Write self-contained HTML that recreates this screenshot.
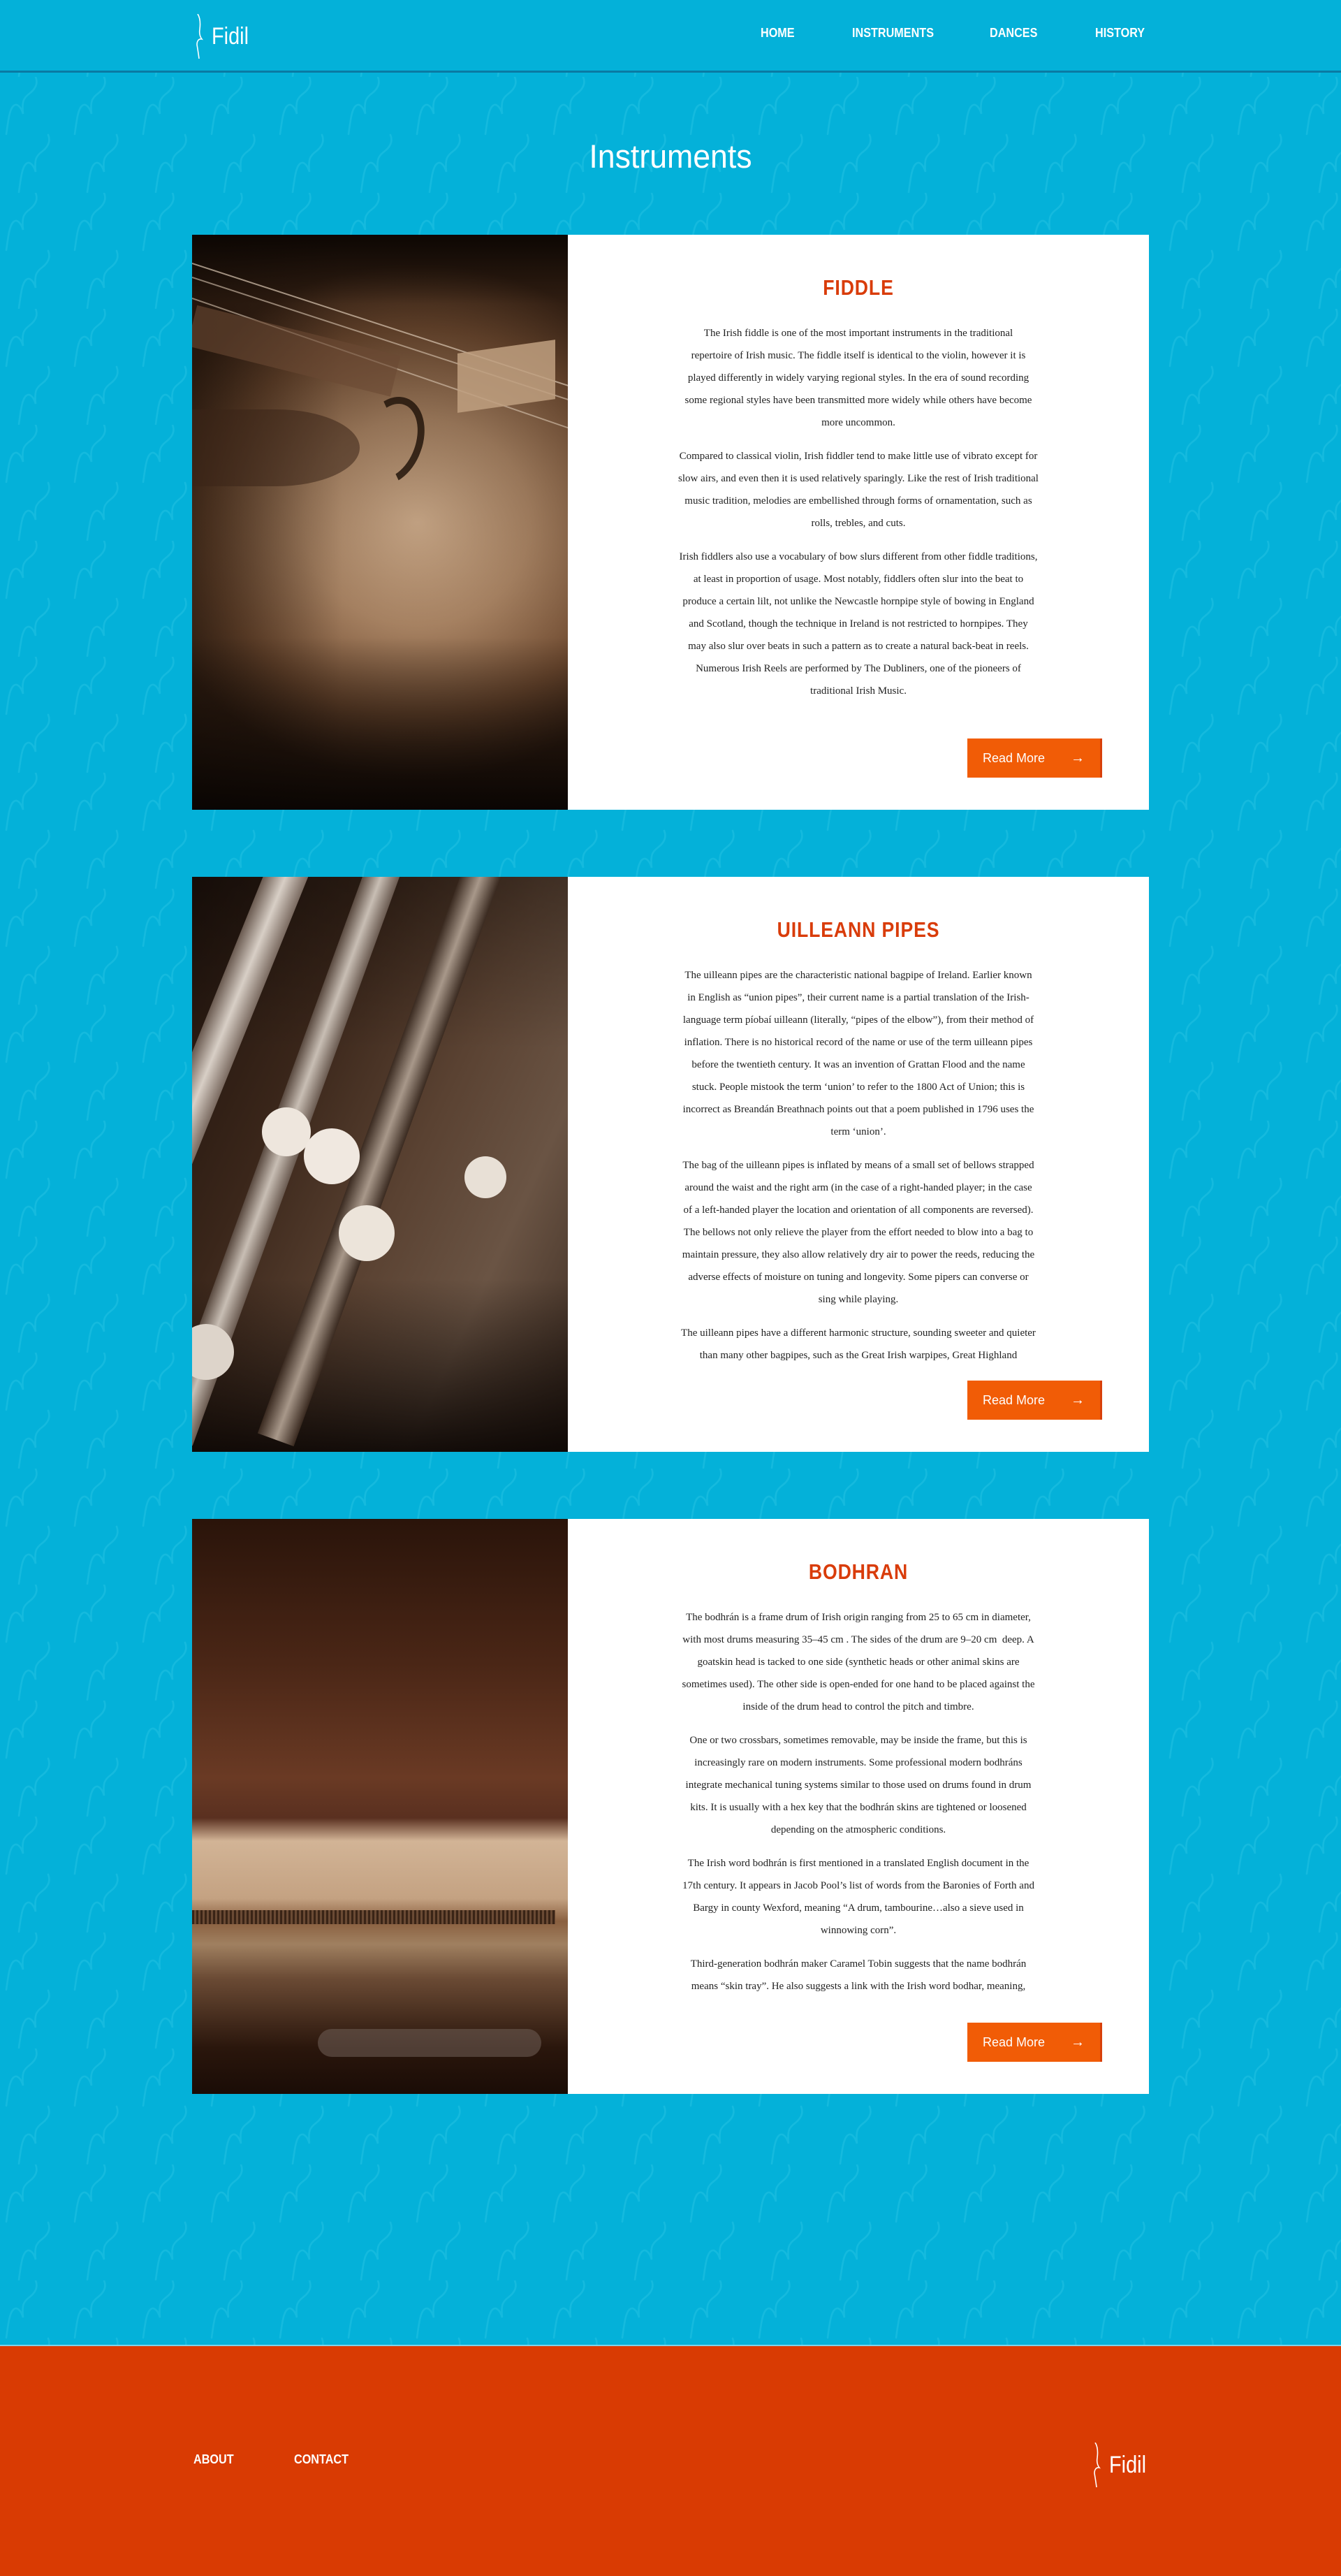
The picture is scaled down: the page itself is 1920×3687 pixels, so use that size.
<!DOCTYPE html>
<html><head><meta charset="utf-8"><style>
*{margin:0;padding:0;box-sizing:border-box}
body{width:1920px;height:3687px;position:relative;background:#04b1d9;overflow:hidden;font-family:"Liberation Sans",sans-serif}
#pat{position:absolute;left:0;top:104px;width:1920px;height:3253px}
header{position:absolute;left:0;top:0;width:1920px;height:104px;background:#04b1d9;border-bottom:3px solid #0a7aa3}
.logo{position:absolute;display:flex;align-items:center;color:#fff}
.logo span{font-size:34px;font-weight:300;margin-left:4px;transform:scaleX(.85);transform-origin:left}
nav a{position:absolute;top:37px;color:#fff;font-weight:bold;font-size:18px;text-decoration:none;transform:scaleX(.9);transform-origin:left}
h1{position:absolute;top:196px;left:0;width:1920px;text-align:center;color:#fff;font-weight:normal;font-size:47px;transform:scaleX(.95)}
.card{position:absolute;left:275px;width:1370px;height:823px;background:#fff}
.img{position:absolute;left:0;top:0;width:538px;height:823px;overflow:hidden}
.card h2{position:absolute;left:538px;width:832px;top:58px;text-align:center;color:#d93c0a;font-size:31px;font-weight:bold;letter-spacing:1px;transform:scaleX(.86)}
.txt{position:absolute;left:538px;width:832px;top:125px;text-align:center;font-family:"Liberation Serif",serif;font-size:15px;line-height:32px;color:#222;white-space:nowrap}
.txt p{margin-bottom:16px}
.btn{position:absolute;left:1110px;top:721px;width:193px;height:56px;background:#f15c06;border-right:3px solid #d8400a;color:#fff;font-size:18px;line-height:56px;padding-left:22px}
.btn b{position:absolute;right:22px;top:0;font-weight:bold;font-size:20px}
footer{position:absolute;left:0;top:3356px;width:1920px;height:331px;background:#d93b03;border-top:2px solid #7fd3ea}
footer a{position:absolute;top:152px;color:#fff;font-weight:bold;font-size:18px;transform:scaleX(.9);transform-origin:left}
</style></head><body>
<svg id="pat" width="1920" height="3253"><defs><pattern id="p" width="98" height="166" patternUnits="userSpaceOnUse" x="0" y="6">
<g fill="none" stroke="#15bade" stroke-width="2.6" stroke-linecap="round">
<path d="M51,0 C55,10 50,18 42,24 C34,30 31,35 33,53 C30,42 24,38 20,41 C14,45 12,60 9,82"/>
<path d="M69,83 C73,93 68,101 60,107 C52,113 49,118 51,136 C48,125 42,121 38,124 C32,128 30,143 27,165"/>
</g></pattern></defs><rect width="1920" height="3253" fill="url(#p)"/></svg>
<header>
<div class="logo" style="left:277px;top:20px"><svg width="22" height="64" viewBox="0 0 22 64"><path d="M6,0 C10,6 10,14 9,22 C8,28 9,32 12,36 C8,35 5,38 5,44 C6,50 7,56 8,64" fill="none" stroke="#fff" stroke-width="1.6"/></svg><span>Fidil</span></div>
<nav><a style="left:1089px">HOME</a><a style="left:1220px">INSTRUMENTS</a><a style="left:1417px">DANCES</a><a style="left:1568px">HISTORY</a></nav>
</header>
<h1>Instruments</h1>

<div class="card" style="top:336px">
<div class="img" style="background:linear-gradient(180deg,rgba(10,5,2,.95) 0%,rgba(10,5,2,.2) 12%,rgba(0,0,0,0) 70%,rgba(8,4,2,.95) 100%),linear-gradient(90deg,rgba(30,18,10,.5) 0%,rgba(0,0,0,0) 40%),radial-gradient(ellipse 75% 45% at 60% 50%,#cdab8a 0%,#a78262 40%,#6e4a30 75%,#3a2416 100%)">
<div style="position:absolute;left:0;top:40px;width:700px;height:2px;background:#d8c6b2;transform:rotate(18deg);transform-origin:left;opacity:.7"></div>
<div style="position:absolute;left:0;top:60px;width:700px;height:2px;background:#d8c6b2;transform:rotate(18deg);transform-origin:left;opacity:.6"></div>
<div style="position:absolute;left:0;top:90px;width:700px;height:2px;background:#d8c6b2;transform:rotate(19deg);transform-origin:left;opacity:.6"></div>
<div style="position:absolute;left:0;top:100px;width:300px;height:60px;background:#6a4a34;transform:rotate(14deg);transform-origin:left;opacity:.6"></div>
<div style="position:absolute;left:0;top:250px;width:240px;height:110px;background:#3a2418;border-radius:0 50% 50% 0;opacity:.55"></div>
<div style="position:absolute;left:240px;top:230px;width:90px;height:130px;border:10px solid #24160c;border-radius:50%;border-left-color:transparent;border-bottom-color:transparent;transform:rotate(20deg);opacity:.85"></div>
<div style="position:absolute;left:380px;top:160px;width:140px;height:85px;background:#c0a080;transform:skewY(-8deg);opacity:.85"></div>
</div>
<h2>FIDDLE</h2>
<div class="txt">
<p>The Irish fiddle is one of the most important instruments in the traditional<br>repertoire of Irish music. The fiddle itself is identical to the violin, however it is<br>played differently in widely varying regional styles. In the era of sound recording<br>some regional styles have been transmitted more widely while others have become<br>more uncommon.</p>
<p>Compared to classical violin, Irish fiddler tend to make little use of vibrato except for<br>slow airs, and even then it is used relatively sparingly. Like the rest of Irish traditional<br>music tradition, melodies are embellished through forms of ornamentation, such as<br>rolls, trebles, and cuts.</p>
<p>Irish fiddlers also use a vocabulary of bow slurs different from other fiddle traditions,<br>at least in proportion of usage. Most notably, fiddlers often slur into the beat to<br>produce a certain lilt, not unlike the Newcastle hornpipe style of bowing in England<br>and Scotland, though the technique in Ireland is not restricted to hornpipes. They<br>may also slur over beats in such a pattern as to create a natural back-beat in reels.<br>Numerous Irish Reels are performed by The Dubliners, one of the pioneers of<br>traditional Irish Music.</p>
</div>
<div class="btn">Read More<b>→</b></div>
</div>

<div class="card" style="top:1255px">
<div class="img" style="background:linear-gradient(180deg,rgba(0,0,0,.3) 0%,rgba(0,0,0,0) 30%,rgba(0,0,0,0) 70%,rgba(10,5,3,.9) 100%),linear-gradient(115deg,#1e120c 0%,#3a261a 30%,#5a4232 55%,#6a5444 75%,#3a2a20 100%)">
<div style="position:absolute;left:120px;top:-40px;width:60px;height:900px;background:linear-gradient(90deg,#6a5a50,#d8cfc6,#7a6a60);transform:rotate(22deg);transform-origin:top"></div>
<div style="position:absolute;left:260px;top:-40px;width:50px;height:900px;background:linear-gradient(90deg,#5a4a40,#c8beb4,#6a5a50);transform:rotate(20deg);transform-origin:top"></div>
<div style="position:absolute;left:400px;top:-40px;width:55px;height:900px;background:linear-gradient(90deg,#3a2a20,#a8988a,#3a2a20);transform:rotate(20deg);transform-origin:top"></div>
<div style="position:absolute;left:100px;top:330px;width:70px;height:70px;border-radius:50%;background:#eee6dd"></div>
<div style="position:absolute;left:160px;top:360px;width:80px;height:80px;border-radius:50%;background:#f0e8e0"></div>
<div style="position:absolute;left:210px;top:470px;width:80px;height:80px;border-radius:50%;background:#ece4da"></div>
<div style="position:absolute;left:390px;top:400px;width:60px;height:60px;border-radius:50%;background:#e8e0d6"></div>
<div style="position:absolute;left:-20px;top:640px;width:80px;height:80px;border-radius:50%;background:#ddd4ca"></div>
</div>
<h2>UILLEANN PIPES</h2>
<div class="txt">
<p>The uilleann pipes are the characteristic national bagpipe of Ireland. Earlier known<br>in English as “union pipes”, their current name is a partial translation of the Irish-<br>language term píobaí uilleann (literally, “pipes of the elbow”), from their method of<br>inflation. There is no historical record of the name or use of the term uilleann pipes<br>before the twentieth century. It was an invention of Grattan Flood and the name<br>stuck. People mistook the term ‘union’ to refer to the 1800 Act of Union; this is<br>incorrect as Breandán Breathnach points out that a poem published in 1796 uses the<br>term ‘union’.</p>
<p>The bag of the uilleann pipes is inflated by means of a small set of bellows strapped<br>around the waist and the right arm (in the case of a right-handed player; in the case<br>of a left-handed player the location and orientation of all components are reversed).<br>The bellows not only relieve the player from the effort needed to blow into a bag to<br>maintain pressure, they also allow relatively dry air to power the reeds, reducing the<br>adverse effects of moisture on tuning and longevity. Some pipers can converse or<br>sing while playing.</p>
<p>The uilleann pipes have a different harmonic structure, sounding sweeter and quieter<br>than many other bagpipes, such as the Great Irish warpipes, Great Highland</p>
</div>
<div class="btn">Read More<b>→</b></div>
</div>

<div class="card" style="top:2174px">
<div class="img" style="background:linear-gradient(180deg,#2a140a 0%,#4a2616 25%,#6a3a24 45%,#5a3020 52%,#d2b496 56%,#c4a282 66%,#8a6040 70%,#a08060 74%,#6a4a34 80%,#2a160c 92%,#1a0c06 100%)">
<div style="position:absolute;left:0;top:560px;width:520px;height:20px;background:repeating-linear-gradient(90deg,#3a2416 0 3px,#6a4a34 3px 6px)"></div>
<div style="position:absolute;left:180px;top:730px;width:320px;height:40px;background:#6a5a52;border-radius:20px;opacity:.6"></div>
</div>
<h2>BODHRAN</h2>
<div class="txt">
<p>The bodhrán is a frame drum of Irish origin ranging from 25 to 65 cm in diameter,<br>with most drums measuring 35–45 cm . The sides of the drum are 9–20 cm&nbsp; deep. A<br>goatskin head is tacked to one side (synthetic heads or other animal skins are<br>sometimes used). The other side is open-ended for one hand to be placed against the<br>inside of the drum head to control the pitch and timbre.</p>
<p>One or two crossbars, sometimes removable, may be inside the frame, but this is<br>increasingly rare on modern instruments. Some professional modern bodhráns<br>integrate mechanical tuning systems similar to those used on drums found in drum<br>kits. It is usually with a hex key that the bodhrán skins are tightened or loosened<br>depending on the atmospheric conditions.</p>
<p>The Irish word bodhrán is first mentioned in a translated English document in the<br>17th century. It appears in Jacob Pool’s list of words from the Baronies of Forth and<br>Bargy in county Wexford, meaning “A drum, tambourine…also a sieve used in<br>winnowing corn”.</p>
<p>Third-generation bodhrán maker Caramel Tobin suggests that the name bodhrán<br>means “skin tray”. He also suggests a link with the Irish word bodhar, meaning,</p>
</div>
<div class="btn">Read More<b>→</b></div>
</div>

<footer>
<a style="left:277px">ABOUT</a><a style="left:421px">CONTACT</a>
<div class="logo" style="left:1562px;top:138px"><svg width="22" height="64" viewBox="0 0 22 64"><path d="M6,0 C10,6 10,14 9,22 C8,28 9,32 12,36 C8,35 5,38 5,44 C6,50 7,56 8,64" fill="none" stroke="#fff" stroke-width="1.6"/></svg><span>Fidil</span></div>
</footer>
</body></html>
